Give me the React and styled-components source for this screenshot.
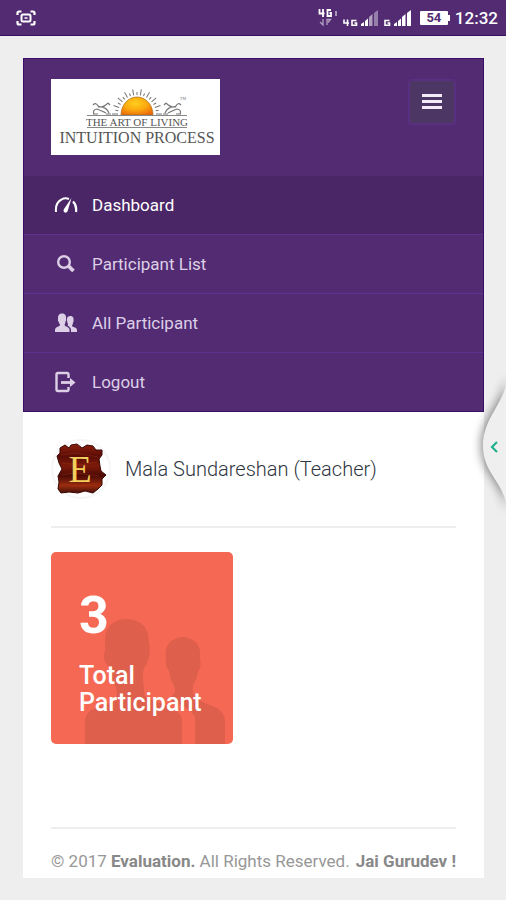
import React from "react";
import styled, { createGlobalStyle } from "styled-components";

const GlobalStyle = createGlobalStyle`
  * {
    box-sizing: border-box;
  }
  body {
    margin: 0;
    min-height: 100vh;
    background: #eeeeee;
    font-family: Roboto, "Liberation Sans", sans-serif;
  }
`;

const StatusBar = styled.div`
  display: flex;
  align-items: center;
  justify-content: space-between;
  height: 36px;
  padding: 0 8px 0 16px;
  background: #522b73;
  border-bottom: 1px solid #35105f;
  color: #fff;
`;

const StatusGroup = styled.div`
  display: flex;
  align-items: center;
  gap: 5px;
`;

const Battery = styled.span`
  position: relative;
  width: 28px;
  height: 14px;
  margin: 0 2px 0 3px;
  border-radius: 1px;
  background: #fff;
  color: #522b73;
  font-size: 13px;
  font-weight: 700;
  line-height: 14px;
  text-align: center;

  &::after {
    content: "";
    position: absolute;
    top: 4px;
    right: -2px;
    width: 2px;
    height: 6px;
    background: #fff;
  }
`;

const Clock = styled.span`
  font-size: 17px;
  font-weight: 500;
  line-height: 20px;
`;

const Page = styled.div`
  margin: 22px 22px 22px 23px;
  background: #fff;
`;

const Sidebar = styled.header`
  background: #522b73;
  border: 1px solid #3a0d6b;
`;

const Brand = styled.div`
  display: flex;
  align-items: flex-start;
  justify-content: space-between;
  padding: 20px 27px 21px;
`;

const Logo = styled.a`
  display: block;
  width: 169px;
  height: 76px;
  background: #fff;
`;

const MenuButton = styled.button`
  display: flex;
  align-items: center;
  justify-content: center;
  width: 48px;
  height: 46px;
  padding: 0;
  border: 2px solid #59307f;
  border-radius: 4px;
  background: #4b3664;
  color: #f3ecf8;
`;

const Menu = styled.ul`
  margin: 0;
  padding: 0;
  list-style: none;
`;

const MenuItem = styled.li`
  & + & {
    border-top: 1px solid #5d3390;
  }
`;

const MenuLink = styled.a`
  display: flex;
  align-items: center;
  gap: 14px;
  height: 58px;
  padding: 0 30px;
  background: ${(props) => (props.$active ? "#4b2666" : "transparent")};
  color: ${(props) => (props.$active ? "#fff" : "#dccfe6")};
  font-size: 17px;
  line-height: 24px;
  text-decoration: none;
`;

const Content = styled.main`
  padding: 0 28px;
`;

const Profile = styled.div`
  display: flex;
  align-items: center;
  gap: 14px;
  height: 116px;
  border-bottom: 2px solid #eeeeee;
`;

const ProfileName = styled.span`
  color: #303641;
  font-size: 20px;
  font-weight: 300;
  line-height: 28px;
`;

const Tile = styled.section`
  position: relative;
  width: 45%;
  min-width: 182px;
  height: 192px;
  margin: 24px 0 83px;
  padding: 32px 28px;
  overflow: hidden;
  border-radius: 5px;
  background: #f56954;
  color: #fff;
`;

const TileArt = styled.svg`
  position: absolute;
  right: 0;
  bottom: 0;
`;

const TileNumber = styled.div`
  position: relative;
  font-size: 52px;
  font-weight: 700;
  line-height: 64px;
`;

const TileTitle = styled.h3`
  position: relative;
  margin: 14px 0 0;
  font-size: 25px;
  font-weight: 500;
  line-height: 27px;
`;

const Footer = styled.footer`
  display: flex;
  justify-content: space-between;
  padding: 21px 0 6px;
  border-top: 2px solid #eeeeee;
  color: #979797;
  font-size: 17px;
  line-height: 22px;
  white-space: nowrap;
`;

const Strong = styled.strong`
  color: #888;
  font-weight: 700;
`;

const EdgeTab = styled.button`
  position: fixed;
  top: 366px;
  right: 0;
  width: 40px;
  height: 164px;
  padding: 0;
  border: 0;
  background: none;
`;

const ScreenIcon = () => (
  <svg width="20" height="16" viewBox="0 0 20 16" fill="none" stroke="#fff">
    <path
      d="M1.500 5V3Q1.500 1.500 3 1.500H5.500M14.500 1.500H17Q18.500 1.500 18.500 3V5M18.500 11V13Q18.500 14.500 17 14.500H14.500M5.500 14.500H3Q1.500 14.500 1.500 13V11"
      strokeWidth="2.200"
    />
    <rect x="5.500" y="4.500" width="9" height="7" rx="1.500" strokeWidth="2" />
    <path d="M8.500 8H11.500" strokeWidth="1.500" />
  </svg>
);

const NetworkIcon = () => (
  <svg width="20" height="20" viewBox="0 0 20 20" fill="none" stroke="#fff">
    <path d="M1.500 1V5.500H6.500M5 1V9M13 2H9.500V8H13V5H11.500" strokeWidth="1.800" />
    <path d="M18 3V8" strokeWidth="1" />
    <path d="M5 11V17L2 14M9 17V11.500H12.500L10 14.500" strokeWidth="1.300" opacity=".55" />
  </svg>
);

const SignalIcon = ({ lte, full }) => (
  <svg width={lte ? 36 : 28} height="18" viewBox={lte ? "0 0 36 18" : "8 0 28 18"}>
    <g fill="none" stroke="#fff" strokeWidth="1.600">
      {lte && <path d="M1 10.500V14H6M4.500 10.500V17" />}
      <path d="M13.500 11.500H9V16.200H13.500V14H11.500" />
    </g>
    <g fill="#fff">
      <path d="M18 17V15L21 13V17ZM22 17V12L25 9.500V17Z" />
      <path d="M26 17V8L29.500 5V17Z" opacity={full ? 1 : 0.55} />
      <path d="M31 17V4L35 1V17Z" opacity={full ? 1 : 0.4} />
    </g>
  </svg>
);

const rays = Array.from({ length: 19 }, (_, i) => 180 + i * 10);

const swan =
  "M42 26Q45 23 47 27Q51 30 57 24M43 35Q41 31 46 30Q51 32 55 34M47 28Q55 27 58 34M57 24L59 26M42 35H47M55 35H60";

const SunLogo = () => (
  <svg width="169" height="76" viewBox="0 0 169 76">
    <defs>
      <radialGradient id="sun" cx="45%" cy="35%" r="75%">
        <stop offset="0" stopColor="#ffcf1c" />
        <stop offset=".5" stopColor="#fba90f" />
        <stop offset="1" stopColor="#e9640a" />
      </radialGradient>
    </defs>
    <g stroke="#777" strokeWidth="1">
      {rays.map((deg, i) => (
        <path
          key={deg}
          d={i % 2 ? "M19 0H22" : "M19 0H25"}
          transform={`translate(86 35) rotate(${deg})`}
        />
      ))}
    </g>
    <path d="M70 36A16 18 0 0 1 102 36Z" fill="url(#sun)" stroke="#a66b17" strokeWidth=".7" />
    <path d="M36 36.500H136M36 48.500H136" stroke="#888" />
    <g fill="none" stroke="#777" strokeWidth="1.200">
      <path d={swan} />
      <path d={swan} transform="matrix(-1 0 0 1 172 0)" />
    </g>
    <g fontFamily="Liberation Serif, serif" textAnchor="middle">
      <text x="132" y="21" fontSize="4" fill="#777">TM</text>
      <text x="86" y="47" fontSize="11" fill="#555">THE ART OF LIVING</text>
      <text x="86" y="64" fontSize="16" fill="#555">INTUITION PROCESS</text>
    </g>
  </svg>
);

const GaugeIcon = () => (
  <svg width="24" height="24" viewBox="0 0 24 24" fill="none" stroke="currentColor">
    <path d="M2 19Q1 10 7.500 6.500Q11 4.500 15 6" strokeWidth="2" />
    <path d="M19 8.500Q23 12.500 22 19" strokeWidth="2.200" />
    <path d="M17.500 5L13.500 18.500Q12 20.500 10 19Q9 18 10 16Z" fill="currentColor" stroke="none" />
  </svg>
);

const SearchIcon = () => (
  <svg width="24" height="24" viewBox="0 0 24 24" fill="none" stroke="currentColor">
    <circle cx="10" cy="10" r="5.800" strokeWidth="2.400" />
    <path d="M14.500 14L19.500 19" strokeWidth="3.800" />
  </svg>
);

const UsersIcon = () => (
  <svg width="24" height="24" viewBox="0 0 24 24" fill="currentColor">
    <path d="M8 2.500C11.500 2.500 12.500 5 12 8Q12.500 9.500 11.500 10.500Q11.500 12.500 10.500 13.500Q10.500 14.500 12 15.500Q15.500 16.500 15.500 19V21H1V19Q1 16.500 4.500 15.500Q6.500 14.500 6 13.500Q5 12.500 4.500 10.500Q3.500 9.500 4 8Q3.500 2.500 8 2.500Z" />
    <path d="M16 5C19 5 20 7 19.500 9.500Q20 10.500 19 11.500Q19 13.500 18 14.500Q18 15.500 19.500 16Q23 17 23 19V21H17V19Q17 16.500 13.500 14.500Q14.500 13.500 13.500 12Q12.500 9 13 7Q14 5 16 5Z" />
  </svg>
);

const LogoutIcon = () => (
  <svg width="24" height="24" viewBox="0 0 24 24" fill="none" stroke="currentColor">
    <path d="M14.500 8V4.500Q14.500 3 13 3H4Q2.500 3 2.500 4.500V19.500Q2.500 21 4 21H13Q14.500 21 14.500 19.500V17" strokeWidth="2.400" />
    <path d="M7 12.500H17" strokeWidth="2.800" />
    <path d="M16 8L21.500 12.500L16 17Z" fill="currentColor" stroke="none" />
  </svg>
);

const Avatar = () => (
  <svg width="60" height="60" viewBox="0 0 60 60">
    <defs>
      <linearGradient id="wood" x1="0" y1="0" x2="0" y2="1">
        <stop offset="0" stopColor="#8d1f0c" />
        <stop offset=".25" stopColor="#5a0d06" />
        <stop offset=".45" stopColor="#7c1a0a" />
        <stop offset=".65" stopColor="#4c0a05" />
        <stop offset=".85" stopColor="#9a2c0e" />
        <stop offset="1" stopColor="#45100a" />
      </linearGradient>
    </defs>
    <circle cx="30" cy="30" r="29" fill="#fff" stroke="#f6f6f6" strokeWidth="2" />
    <path
      d="M9 9L14 6L18 9L20 6L26 5L31 9L36 6L42 7L45 11L51 11L51 16L48 20L49 27L50 32L55 36L51 40L51 46L47 50L42 54L34 52L27 54L18 53L10 54L7 50L8 43L7 37L11 30L8 24L6 17L9 14Z"
      fill="url(#wood)"
      stroke="#3a0805"
    />
    <path d="M10 16L25 14L47 18M11 24L30 26L46 23M10 36L24 34L48 37M10 45L28 47L47 44" fill="none" stroke="#b13b17" opacity=".3" />
    <text x="29" y="43" fontSize="38" fontFamily="Liberation Serif, serif" textAnchor="middle" fill="#f3cf5b">E</text>
  </svg>
);

const menuItems = [
  { name: "Dashboard", icon: GaugeIcon, active: true },
  { name: "Participant List", icon: SearchIcon },
  { name: "All Participant", icon: UsersIcon },
  { name: "Logout", icon: LogoutIcon },
];

function App() {
  return (
    <>
      <GlobalStyle />
      <StatusBar>
        <ScreenIcon />
        <StatusGroup>
          <NetworkIcon />
          <SignalIcon lte />
          <SignalIcon full />
          <Battery>54</Battery>
          <Clock>12:32</Clock>
        </StatusGroup>
      </StatusBar>

      <Page>
        <Sidebar>
          <Brand>
            <Logo href="#" aria-label="Home">
              <SunLogo />
            </Logo>
            <MenuButton type="button" aria-label="Toggle menu">
              <svg width="20" height="16" viewBox="0 0 20 16" fill="currentColor">
                <path d="M0 0H20V3H0ZM0 6H20V9H0ZM0 12H20V15H0Z" />
              </svg>
            </MenuButton>
          </Brand>
          <nav>
            <Menu>
              {menuItems.map(({ name, icon: Icon, active }) => (
                <MenuItem key={name}>
                  <MenuLink href="#" $active={active}>
                    <Icon />
                    {name}
                  </MenuLink>
                </MenuItem>
              ))}
            </Menu>
          </nav>
        </Sidebar>

        <Content>
          <Profile>
            <Avatar />
            <ProfileName>Mala Sundareshan (Teacher)</ProfileName>
          </Profile>

          <Tile>
            <TileArt width="148" height="125" viewBox="0 0 148 125" fill="#dd5f4c">
              <path d="M0 125V101Q1 93 9 90L42 78Q53 74 53 65Q49 59 24 48Q18 43 19 34Q21 32 20 25Q19 1 41 0Q65 1 64 25Q66 32 63 41Q62 46 59 49Q57 60 53 67Q54 76 65 80L89 90Q97 94 97 103V125Z" />
              <path d="M24 48L27 60Q34 70 31 82L60 82L57 48Z" />
              <path d="M110 125V99Q108 92 98 87L82 80Q93 75 89 67Q85 60 84 52Q80 47 81 40Q78 20 98 18Q117 20 115 39Q117 47 113 53Q112 60 108 66V74Q111 80 120 84L132 89Q140 94 140 103V125Z" />
            </TileArt>
            <TileNumber>3</TileNumber>
            <TileTitle>Total Participant</TileTitle>
          </Tile>

          <Footer>
            <span>
              © 2017 <Strong>Evaluation.</Strong> All Rights Reserved.
            </span>
            <Strong>Jai Gurudev !</Strong>
          </Footer>
        </Content>
      </Page>

      <EdgeTab type="button" aria-label="Open panel">
        <svg width="40" height="164" viewBox="0 0 40 164" fill="none">
          <path
            d="M42 10C39 38 17 51 17 80C17 108 39 116 42 146Z"
            fill="#efefef"
            style={{ filter: "drop-shadow(-2px 0 5px rgba(0,0,0,.45))" }}
          />
          <path d="M31 76L26 81L31 86" stroke="#20b08c" strokeWidth="2.200" />
        </svg>
      </EdgeTab>
    </>
  );
}

export default App;
